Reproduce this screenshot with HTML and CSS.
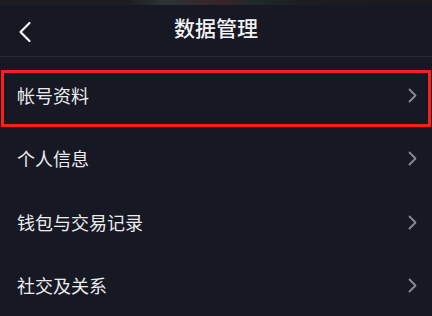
FILE: index.html
```html
<!DOCTYPE html>
<html lang="zh-CN">
<head>
    <meta charset="UTF-8">
    <meta name="viewport" content="width=device-width, initial-scale=1.0">
    <title>数据管理</title>
    <link rel="stylesheet" href="styles.css">
</head>
<body>
    <div class="top-strip"></div>
    <header class="nav-bar">
        <button class="back-btn" aria-label="返回">
            <svg width="14" height="22" viewBox="0 0 14 22">
                <path d="M11.5 2 L2.5 11 L11.5 20" fill="none" stroke="#f2f2f2" stroke-width="2.2" stroke-linecap="round" stroke-linejoin="round"/>
            </svg>
        </button>
        <h1 class="nav-title">数据管理</h1>
        <span class="nav-spacer"></span>
    </header>

    <ul class="menu-list">
        <li class="menu-item highlighted">
            <span class="menu-label">帐号资料</span>
            <svg class="chevron" width="9" height="15" viewBox="0 0 9 15"><path d="M1.5 1.5 L7.5 7.5 L1.5 13.5" fill="none" stroke="#8a8b92" stroke-width="1.8" stroke-linecap="round" stroke-linejoin="round"/></svg>
        </li>
        <li class="menu-item">
            <span class="menu-label">个人信息</span>
            <svg class="chevron" width="9" height="15" viewBox="0 0 9 15"><path d="M1.5 1.5 L7.5 7.5 L1.5 13.5" fill="none" stroke="#8a8b92" stroke-width="1.8" stroke-linecap="round" stroke-linejoin="round"/></svg>
        </li>
        <li class="menu-item">
            <span class="menu-label">钱包与交易记录</span>
            <svg class="chevron" width="9" height="15" viewBox="0 0 9 15"><path d="M1.5 1.5 L7.5 7.5 L1.5 13.5" fill="none" stroke="#8a8b92" stroke-width="1.8" stroke-linecap="round" stroke-linejoin="round"/></svg>
        </li>
        <li class="menu-item">
            <span class="menu-label">社交及关系</span>
            <svg class="chevron" width="9" height="15" viewBox="0 0 9 15"><path d="M1.5 1.5 L7.5 7.5 L1.5 13.5" fill="none" stroke="#8a8b92" stroke-width="1.8" stroke-linecap="round" stroke-linejoin="round"/></svg>
        </li>
    </ul>
</body>
</html>
```

FILE: styles.css
```css
body {
    margin: 0;
    background-color: #161823;
    font-family: "Noto Sans CJK SC", "Noto Sans", sans-serif;
    color: #ececee;
    overflow: hidden;
}
.top-strip {
    height: 5px;
    background: linear-gradient(90deg, #1d1d20 0%, #1e1e22 30%, #2a3433 38%, #3a2228 52%, #1f2a2a 58%, #1d1d20 70%, #1b1b1e 100%);
}
.nav-bar {
    display: grid;
    grid-template-columns: 44px 1fr 44px;
    align-items: start;
    height: 51px;
    border-bottom: 1px solid #262732;
}
.back-btn {
    background: none;
    border: none;
    padding: 16px 0 0 18px;
    margin: 0;
    cursor: pointer;
    text-align: left;
}
.back-btn svg {
    display: block;
}
.nav-title {
    margin: 0;
    padding-top: 11px;
    font-size: 21px;
    line-height: 22px;
    font-weight: 500;
    text-align: center;
    color: #f2f2f3;
}
.menu-list {
    list-style: none;
    margin: 0;
    padding: 7px 0 0;
}
.menu-item {
    position: relative;
    display: flex;
    align-items: center;
    justify-content: space-between;
    height: 63.5px;
    padding: 0 15px 0 17px;
    box-sizing: border-box;
}
.menu-label {
    font-size: 18px;
    line-height: 20px;
    margin-top: -2px;
}
.chevron {
    display: block;
    margin-top: -1px;
}
.highlighted::after {
    content: "";
    position: absolute;
    top: 6px;
    left: 1px;
    right: 1px;
    bottom: 1px;
    border: 3px solid #fb1e1e;
}
```
